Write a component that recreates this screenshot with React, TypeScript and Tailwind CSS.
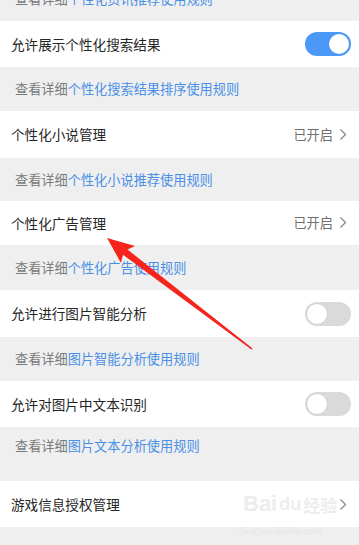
import React from "react";

const font = { fontFamily: '"Noto Sans CJK SC", "Noto Sans", sans-serif' };

const Toggle: React.FC<{ on: boolean }> = ({ on }) =>
  on ? (
    <div className="w-[46px] h-[24px] rounded-full bg-[#4b98f7] flex items-center justify-end pr-[2px]">
      <div className="w-[20px] h-[20px] rounded-full bg-white" />
    </div>
  ) : (
    <div className="w-[46px] h-[24px] rounded-full bg-[#dadada] flex items-center pl-[1px]">
      <div className="w-[22px] h-[22px] rounded-full bg-white border border-[#d0d0d0]" />
    </div>
  );

const Chevron = () => (
  <svg width="8" height="13" viewBox="0 0 8 13" className="ml-[6px]">
    <path d="M1.5 1.5 L6.5 6.5 L1.5 11.5" fill="none" stroke="#8a8a8a" strokeWidth="1.3" />
  </svg>
);

const Row: React.FC<{ title: string; h: string; right?: React.ReactNode }> = ({ title, h, right }) => (
  <div className={`bg-white flex items-center justify-between pl-[11px] ${h}`}>
    <span className="text-[13.6px] text-[#262626]">{title}</span>
    {right}
  </div>
);

const Info: React.FC<{ link: string; h: string }> = ({ link, h }) => (
  <div className={`flex items-center pl-[15px] ${h}`}>
    <span className="text-[13.2px] text-[#7b7b7b]">
      查看详细<span className="text-[#4a90e6]">{link}</span>
    </span>
  </div>
);

const Opened = () => (
  <div className="flex items-center pr-[12px]">
    <span className="text-[13.2px] text-[#6f6f6f]">已开启</span>
    <Chevron />
  </div>
);

export default function App() {
  return (
    <div className="relative w-[359px] h-[545px] overflow-hidden bg-[#efeff0]" style={font}>
      <div className="h-[21px] overflow-hidden flex flex-col justify-end">
        <div className="shrink-0">
          <Info link="个性化资讯推荐使用规则" h="h-[44px]" />
        </div>
      </div>
      <Row title="允许展示个性化搜索结果" h="h-[46px]" right={<div className="pr-[8px]"><Toggle on /></div>} />
      <Info link="个性化搜索结果排序使用规则" h="h-[44px]" />
      <Row title="个性化小说管理" h="h-[47px]" right={<Opened />} />
      <Info link="个性化小说推荐使用规则" h="h-[43px]" />
      <Row title="个性化广告管理" h="h-[44px]" right={<Opened />} />
      <Info link="个性化广告使用规则" h="h-[45px]" />
      <Row title="允许进行图片智能分析" h="h-[47px]" right={<div className="pr-[8px]"><Toggle on={false} /></div>} />
      <Info link="图片智能分析使用规则" h="h-[44px]" />
      <Row title="允许对图片中文本识别" h="h-[46px]" right={<div className="pr-[8px]"><Toggle on={false} /></div>} />
      <div className="h-[54px] flex flex-col">
        <Info link="图片文本分析使用规则" h="h-[38px]" />
      </div>
      <Row
        title="游戏信息授权管理"
        h="h-[46px]"
        right={
          <div className="pr-[12px]">
            <Chevron />
          </div>
        }
      />

      {/* watermark */}
      <div className="absolute left-[243px] top-[493px] flex items-center text-[22px] font-bold text-[#ededed] leading-none" style={{ fontFamily: '"Liberation Sans", sans-serif' }}>
        Bai<span className="text-[18px] mx-[2px]">du</span>
        <span className="text-[17px]" style={font}>经验</span>
      </div>
      <div className="absolute left-[240px] top-[522px] text-[11px] text-[#e6e6e6]" style={{ fontFamily: '"Liberation Serif", serif' }}>
        jingyan.baidu.com
      </div>

      {/* red annotation arrow */}
      <svg className="absolute left-0 top-0" width="359" height="545" viewBox="0 0 359 545">
        <polygon
          points="107,238 135,246 127.5,249.5 252.6,348.4 251.4,349.6 123,254.8 121,263"
          fill="#f5251d"
        />
      </svg>
    </div>
  );
}
